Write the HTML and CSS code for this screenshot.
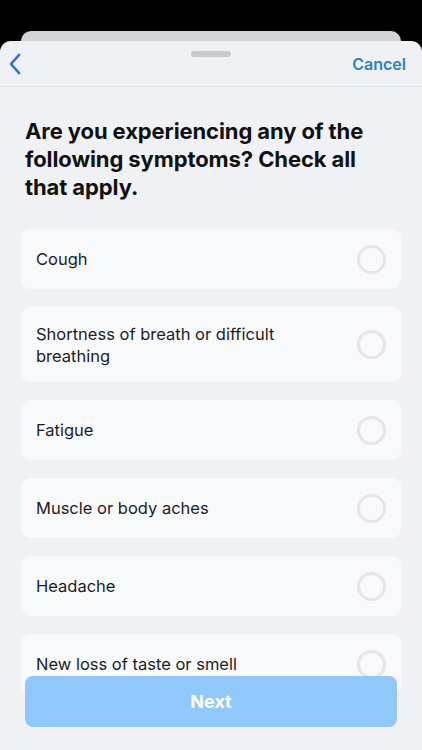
FILE: index.html
```html
<!DOCTYPE html>
<html lang="en">
<head>
    <meta charset="UTF-8">
    <meta name="viewport" content="width=device-width, initial-scale=1.0">
    <title>Symptoms</title>
    <link rel="stylesheet" href="styles.css">
</head>
<body>
    <div class="back-card"></div>
    <div class="sheet">
        <div class="header">
            <div class="handle"></div>
            <button class="back" aria-label="Back">
                <svg width="14" height="22" viewBox="0 0 14 22">
                    <path d="M11 2 L3 11 L11 20" fill="none" stroke="#2f6cd6" stroke-width="2.6" stroke-linecap="round" stroke-linejoin="round"/>
                </svg>
            </button>
            <button class="cancel">Cancel</button>
        </div>
        <div class="content">
            <h1>Are you experiencing any of the following symptoms? Check all that apply.</h1>
            <div class="options">
                <label class="option"><span>Cough</span><i class="radio"></i></label>
                <label class="option"><span>Shortness of breath or difficult breathing</span><i class="radio"></i></label>
                <label class="option"><span>Fatigue</span><i class="radio"></i></label>
                <label class="option"><span>Muscle or body aches</span><i class="radio"></i></label>
                <label class="option"><span>Headache</span><i class="radio"></i></label>
                <label class="option"><span>New loss of taste or smell</span><i class="radio"></i></label>
            </div>
        </div>
        <button class="next">Next</button>
    </div>
</body>
</html>
```

FILE: styles.css
```css
body {
    margin: 0;
    height: 750px;
    overflow: hidden;
    background: #000;
    font-family: Inter, "Noto Sans", sans-serif;
    display: flex;
    flex-direction: column;
}

.back-card {
    margin: 31px 21px 0;
    height: 10px;
    background: #d2d4d8;
    border-radius: 10px 10px 0 0;
}

.sheet {
    position: relative;
    flex: 1;
    background: #eff1f5;
    border-radius: 11px 11px 0 0;
    overflow: hidden;
}

.header {
    position: relative;
    height: 45px;
    display: flex;
    align-items: center;
    justify-content: space-between;
    padding: 0 16px 0 8px;
    border-bottom: 1px solid #e3e5e9;
}

.handle {
    position: absolute;
    top: 10px;
    left: 191px;
    width: 40px;
    height: 6px;
    border-radius: 3px;
    background: #c8cacf;
}

.header button {
    border: none;
    background: none;
    padding: 0;
    margin-top: 1px;
    font-family: inherit;
}

.back {
    display: flex;
}

.cancel {
    font-size: 16px;
    font-weight: 600;
    color: #2a7fd4;
}

.content {
    padding: 30px 21px 0;
}

h1 {
    margin: 0 0 28px 4px;
    font-size: 22px;
    line-height: 28px;
    font-weight: 700;
    color: #111;
    letter-spacing: -0.1px;
}

.options {
    display: flex;
    flex-direction: column;
    gap: 18px;
}

.option {
    display: flex;
    align-items: center;
    justify-content: space-between;
    min-height: 59px;
    box-sizing: border-box;
    padding: 15.5px 15px;
    background: #f8f9fb;
    border-radius: 9px;
    font-size: 16.5px;
    line-height: 22px;
    color: #1d1d1f;
}

.option span {
    max-width: 260px;
}

.radio {
    flex: none;
    width: 23px;
    height: 23px;
    border: 3px solid #e4e4e9;
    border-radius: 50%;
}

.next {
    position: absolute;
    left: 25px;
    right: 25px;
    top: 635px;
    height: 51px;
    border: none;
    border-radius: 8px;
    background: #90c8fc;
    color: #fff;
    font-family: inherit;
    font-size: 18px;
    font-weight: 700;
}
```
